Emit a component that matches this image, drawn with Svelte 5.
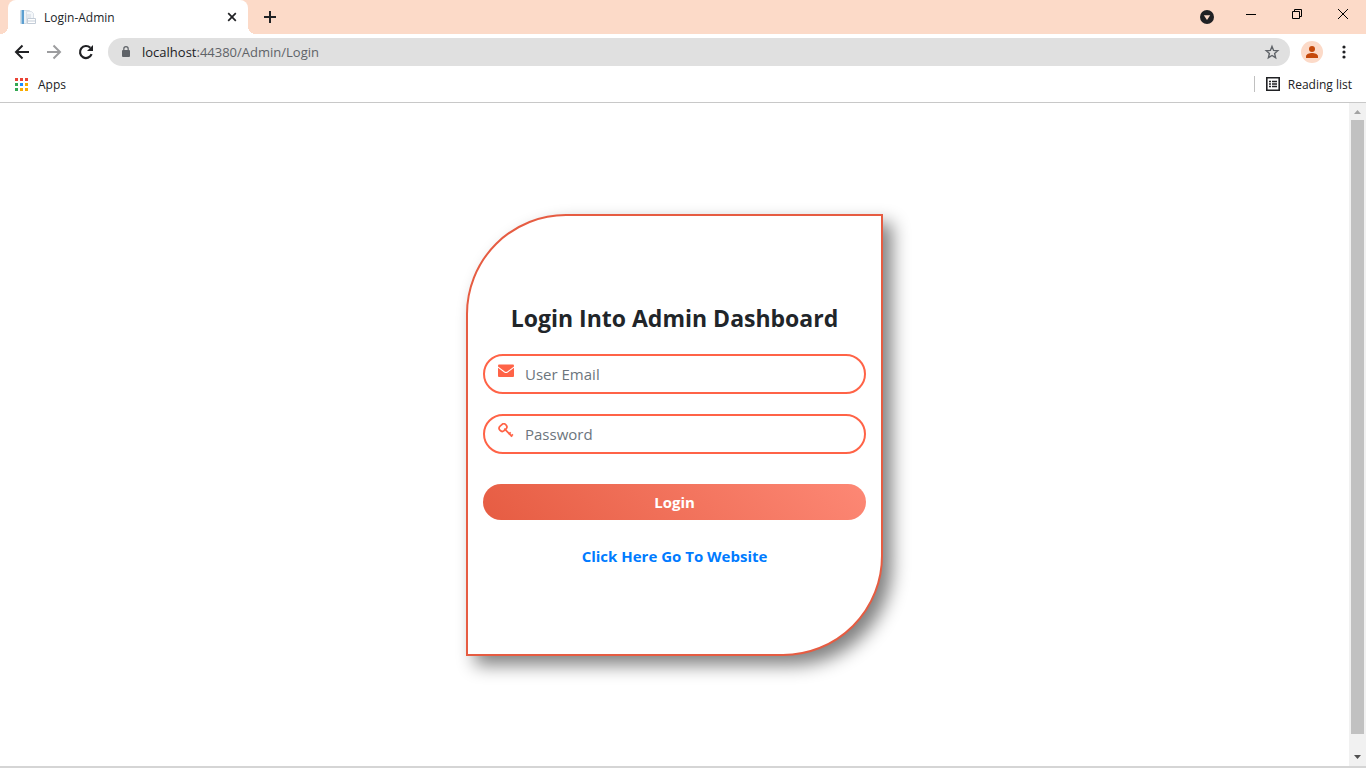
<script>
  let email = $state('');
  let password = $state('');
  const appColors = ['#ea4335', '#ea4335', '#ea4335', '#34a853', '#1a8cff', '#f9ab00', '#34a853', '#f9ab00', '#f9ab00'];
</script>

<div class="browser">
  <header>
    <div class="tabstrip">
      <div class="tab">
        <svg class="favicon" width="16" height="16" viewBox="0 0 16 16">
          <path d="M.5 1.500h9l2 2v11H.5z" fill="#eef3f7" stroke="#d3dce4" />
          <path d="M1 1h3v14H1z" fill="#5d9fd0" />
          <path d="M1 1h1v14H1z" fill="#a6cce7" />
          <path d="M6.500 2.500h5l2 2v10h-7z" fill="#f4f7fa" stroke="#dbe1e8" />
          <path d="M7 6h4M7 8h4" stroke="#d0d7df" />
          <path d="M7.500 9.500h8v5h-8z" fill="#fff" stroke="#c3ccd7" />
          <path d="M8 12h7" stroke="#c3ccd7" />
        </svg>
        <span class="tab-title">Login-Admin</span>
        <button class="icon" aria-label="Close tab">
          <svg width="10" height="10" viewBox="0 0 10 10"><path d="M1.200 1.200l7.600 7.600M8.800 1.200L1.200 8.800" stroke="#202124" stroke-width="1.700" /></svg>
        </button>
      </div>
      <button class="icon new-tab" aria-label="New tab">
        <svg width="14" height="14" viewBox="0 0 14 14"><path d="M7 1v12M1 7h12" stroke="#202124" stroke-width="2" /></svg>
      </button>
      <div class="window-controls">
        <button class="icon search-tabs" aria-label="Search tabs">
          <svg width="14" height="14" viewBox="0 0 14 14"><circle cx="7" cy="7" r="7" fill="#202124" /><path d="M3.800 5.200h6.400L7 10z" fill="#fcdac8" /></svg>
        </button>
        <button class="icon" aria-label="Minimize">
          <svg width="12" height="12" viewBox="0 0 12 12"><path d="M1 6.500h10" stroke="#000" /></svg>
        </button>
        <button class="icon" aria-label="Restore">
          <svg width="12" height="12" viewBox="0 0 12 12" fill="none" stroke="#000"><path d="M1.500 3.500h7v7h-7zM3.500 3.500v-2h7v7h-2" /></svg>
        </button>
        <button class="icon" aria-label="Close">
          <svg width="12" height="12" viewBox="0 0 12 12"><path d="M1 1l10 10M11 1L1 11" stroke="#000" /></svg>
        </button>
      </div>
    </div>

    <div class="toolbar">
      <button class="icon nav" aria-label="Back">
        <svg width="16" height="16" viewBox="0 0 16 16" fill="none" stroke="#202124" stroke-width="2"><path d="M15 8H2.500M8.500 1.500L2 8l6.500 6.500" /></svg>
      </button>
      <button class="icon nav" aria-label="Forward">
        <svg width="16" height="16" viewBox="0 0 16 16" fill="none" stroke="#9c9d9f" stroke-width="2"><path d="M1 8h12.500M7.500 1.500L14 8l-6.500 6.500" /></svg>
      </button>
      <button class="icon nav" aria-label="Reload">
        <svg width="16" height="16" viewBox="0 0 16 16"><path d="M13.600 10.200A6 6 0 1 1 12.300 3.800" fill="none" stroke="#202124" stroke-width="2.200" /><path d="M15 1v6H9z" fill="#202124" /></svg>
      </button>
      <div class="address">
        <svg width="10" height="14" viewBox="0 0 10 14"><path d="M2.800 6V3.900a2.200 2.200 0 0 1 4.400 0V6" fill="none" stroke="#5f6368" stroke-width="1.200" /><rect x="1" y="5" width="8" height="7" rx="1" fill="#5f6368" /></svg>
        <span class="url"><b>localhost</b>:44380/Admin/Login</span>
        <button class="icon" aria-label="Bookmark this page">
          <svg width="16" height="16" viewBox="0 0 16 16"><path d="M8 2.400l1.600 4 4.200.3-3.200 2.800 1 4.200L8 11.500l-3.600 2.200 1-4.200-3.200-2.800 4.200-.3z" fill="none" stroke="#5f6368" stroke-width="1.400" /></svg>
        </button>
      </div>
      <button class="icon profile" aria-label="Profile">
        <svg width="22" height="22" viewBox="0 0 22 22"><circle cx="11" cy="11" r="11" fill="#fcdac8" /><circle cx="11" cy="8" r="3" fill="#c5490b" /><path d="M5 17v-1.700C5 13.200 8.500 12 11 12s6 1.200 6 3.300V17z" fill="#c5490b" /></svg>
      </button>
      <button class="icon menu" aria-label="Menu">
        <svg width="4" height="14" viewBox="0 0 4 14" fill="#202124"><circle cx="2" cy="2" r="1.600" /><circle cx="2" cy="7" r="1.600" /><circle cx="2" cy="12" r="1.600" /></svg>
      </button>
    </div>

    <div class="bookmarks">
      <button class="bookmark">
        <svg width="13" height="13" viewBox="0 0 13 13">
          {#each appColors as color, i}
            <rect x={(i % 3) * 5} y={Math.floor(i / 3) * 5} width="3" height="3" fill={color} />
          {/each}
        </svg>
        Apps
      </button>
      <button class="bookmark reading">
        <svg width="14" height="14" viewBox="0 0 14 14"><path d="M.8.800h12.400v12.400H.8z" fill="none" stroke="#202124" stroke-width="1.600" /><path d="M3 4.500h2M3 7h2M3 9.500h2M6 4.500h5M6 7h5M6 9.500h5" stroke="#202124" stroke-width="1.300" /></svg>
        Reading list
      </button>
    </div>
  </header>

  <div class="viewport">
    <main>
      <form class="card" onsubmit={(e) => e.preventDefault()}>
        <h1>Login Into Admin Dashboard</h1>
        <label class="field">
          <svg width="16" height="16" viewBox="0 0 16 16"><rect y="1.500" width="16" height="12.500" rx="1" fill="#ff6347" /><path d="M-.5 3.800L6.500 9q1.500 1 3 0l7-5.200" fill="none" stroke="#fff" stroke-width="1.100" /></svg>
          <input type="email" aria-label="User Email" placeholder="User Email" bind:value={email} />
        </label>
        <label class="field">
          <svg width="16" height="16" viewBox="0 0 16 16" fill="none" stroke="#ff6347"><rect x="1" y="1.600" width="8" height="6" rx="2.800" transform="rotate(-42 5 4.600)" stroke-width="1.700" /><path d="M6.300 5.700l7.900 8M10.500 11.400l2.200-2.100M12.700 13.500l2.200-2.100" stroke-width="1.700" /></svg>
          <input type="password" aria-label="Password" placeholder="Password" bind:value={password} />
        </label>
        <button class="submit">Login</button>
        <a href="#website">Click Here Go To Website</a>
      </form>
    </main>
    <div class="scrollbar" aria-hidden="true">
      <svg width="17" height="17" viewBox="0 0 17 17"><path d="M5 11h7L8.500 7z" fill="#a3a3a3" /></svg>
      <div class="thumb"></div>
      <svg width="17" height="17" viewBox="0 0 17 17"><path d="M5 6h7l-3.500 4z" fill="#505050" /></svg>
    </div>
  </div>
</div>

<style>
  :global(body) {
    margin: 0;
  }

  .browser {
    display: flex;
    flex-direction: column;
    min-height: 100vh;
    box-sizing: border-box;
    border-bottom: 2px solid #d5d5d5;
    background: #fff;
    color: #212529;
    font-family: 'Segoe UI', 'Open Sans', 'Noto Sans', sans-serif;
    font-size: 12px;
  }

  button {
    font: inherit;
    color: inherit;
    border: 0;
    padding: 0;
    background: none;
    cursor: pointer;
  }

  svg {
    display: block;
    flex: none;
  }

  .icon {
    display: grid;
    place-items: center;
    flex: none;
  }

  header {
    border-bottom: 1px solid #c8c8c8;
  }

  .tabstrip {
    display: flex;
    height: 34px;
    background: #fcdac8;
  }

  .tab {
    position: relative;
    display: flex;
    align-items: center;
    gap: 8px;
    width: 240px;
    box-sizing: border-box;
    margin-left: 8px;
    padding: 0 11px 0 12px;
    border-radius: 8px 8px 0 0;
    background: #fff;
  }

  .tab::before,
  .tab::after {
    content: '';
    position: absolute;
    bottom: 0;
    width: 8px;
    height: 8px;
  }

  .tab::before {
    right: 100%;
    background: radial-gradient(circle at 0 0, transparent 8px, #fff 8px);
  }

  .tab::after {
    left: 100%;
    background: radial-gradient(circle at 100% 0, transparent 8px, #fff 8px);
  }

  .tab-title {
    flex: 1;
  }

  .new-tab {
    width: 28px;
    margin-left: 8px;
  }

  .window-controls {
    display: flex;
    height: 28px;
    margin-left: auto;
  }

  .window-controls .icon {
    width: 46px;
  }

  .window-controls .search-tabs {
    width: 42px;
    height: 34px;
  }

  .toolbar {
    display: flex;
    align-items: center;
    height: 36px;
    padding: 0 12px 0 6px;
  }

  .nav {
    width: 32px;
    height: 32px;
  }

  .address {
    display: flex;
    flex: 1;
    align-items: center;
    gap: 11px;
    height: 28px;
    margin-left: 6px;
    padding: 0 10px 0 13px;
    border-radius: 14px;
    background: #e0e0e0;
  }

  .url {
    flex: 1;
    color: #5f6368;
    font-size: 13px;
  }

  .url b {
    color: #202124;
    font-weight: 400;
  }

  .profile {
    width: 22px;
    margin-left: 11px;
  }

  .menu {
    width: 20px;
    margin-left: 11px;
  }

  .bookmarks {
    display: flex;
    align-items: center;
    justify-content: space-between;
    height: 32px;
    box-sizing: border-box;
    padding: 0 14px 4px 15px;
  }

  .bookmark {
    display: flex;
    align-items: center;
    gap: 10px;
    height: 16px;
    color: #202124;
  }

  .reading {
    gap: 8px;
    padding-left: 11px;
    border-left: 1px solid #c0c0c0;
  }

  .viewport {
    display: flex;
    flex: 1;
  }

  main {
    display: grid;
    flex: 1;
    place-items: center;
    padding: 16px;
  }

  .card {
    display: flex;
    flex-direction: column;
    width: 100%;
    max-width: 417px;
    box-sizing: border-box;
    padding: 87px 15px 86px;
    border: 2px solid #e65c42;
    border-radius: 100px 0;
    background: #fff;
    box-shadow: 9px 9px 18px 0 #808080;
    font-size: 15px;
  }

  h1 {
    margin: 0 0 21px;
    font-size: 23px;
    line-height: 30px;
    font-weight: 700;
    text-align: center;
  }

  .field {
    display: flex;
    height: 40px;
    box-sizing: border-box;
    margin-bottom: 20px;
    padding-left: 13px;
    border: 2px solid #ff6347;
    border-radius: 20px;
  }

  .field svg {
    margin-top: 7px;
  }

  .field input {
    flex: 1;
    min-width: 0;
    padding: 0 12px 0 11px;
    border: 0;
    outline: 0;
    background: none;
    color: #495057;
    font: inherit;
  }

  .field input::placeholder {
    color: #6c757d;
    opacity: 1;
  }

  .submit {
    height: 36px;
    margin: 10px 0 24px;
    border-radius: 18px;
    background: linear-gradient(45deg, #e65c42, #fd8875);
    color: #fff;
    font-weight: 700;
  }

  .card a {
    align-self: center;
    color: #007bff;
    font-weight: 700;
    line-height: 24px;
    text-decoration: none;
  }

  .scrollbar {
    display: flex;
    flex-direction: column;
    width: 17px;
    background: #f1f1f1;
  }

  .thumb {
    flex: 1;
    margin: 0 2px 15px;
    background: #c1c1c1;
  }
</style>
